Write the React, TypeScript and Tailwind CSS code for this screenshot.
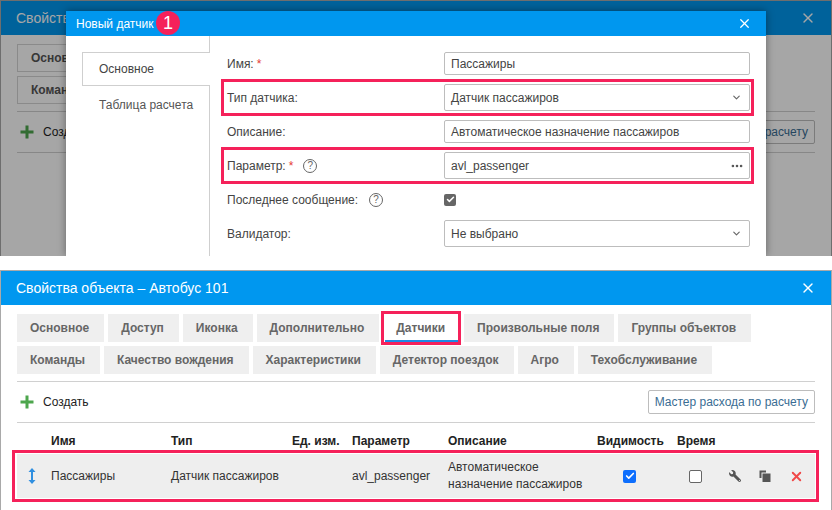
import React from 'react';
import { Check, ChevronDown, Ellipsis, X } from 'lucide-react';
import { FaWrench } from 'react-icons/fa';

const ROW_1 = ['Основное', 'Доступ', 'Иконка', 'Дополнительно', 'Датчики', 'Произвольные поля', 'Группы объектов'];
const ROW_2 = ['Команды', 'Качество вождения', 'Характеристики', 'Детектор поездок', 'Агро', 'Техобслуживание'];

const GRID = 'grid grid-cols-[34px_120px_121px_60px_96px_149px_80px_1fr] items-center';

function Highlight({ className }: { className: string }) {
  return <div className={`absolute border-[3px] border-[#f5215a] pointer-events-none ${className}`} />;
}

function PlusIcon() {
  return (
    <svg width="14" height="14" viewBox="0 0 14 14">
      <rect x="5.5" y="0.5" width="3" height="13" fill="#4da64d" />
      <rect x="0.5" y="5.5" width="13" height="3" fill="#4da64d" />
    </svg>
  );
}

function SortIcon() {
  return (
    <svg width="8" height="16" viewBox="0 0 8 16">
      <path d="M4 0 L7.5 4 H5 V12 H7.5 L4 16 L0.5 12 H3 V4 H0.5 Z" fill="#2f8fe0" />
    </svg>
  );
}

function CopyIcon() {
  return (
    <svg width="12" height="12" viewBox="0 0 12 12">
      <path d="M0.5 0.5 H7 V2.5 H2.5 V8 H0.5 Z" fill="#555" />
      <rect x="3.5" y="3.5" width="8" height="8.5" fill="#555" />
    </svg>
  );
}

function Help() {
  return (
    <span className="w-[14px] h-[14px] rounded-full border border-[#666] text-[#666] text-[10px] leading-[12px] text-center">?</span>
  );
}

function Tab({ label, outlined, active }: { label: string; outlined?: boolean; active?: boolean }) {
  return (
    <div
      className={`relative h-[28px] pl-[13px] pr-[15px] flex items-center text-[12px] font-bold whitespace-nowrap ${
        outlined ? 'bg-white border border-[#d4d4d4] text-[#555]' : 'bg-[#efefef] text-[#666]'
      } ${active && !outlined ? 'text-[#333] bg-white' : ''}`}
    >
      {label}
      {active && !outlined && (
        <>
          <div className="absolute left-[2px] right-[1px] bottom-0 h-[2px] bg-[#1e88e5]" />
          <Highlight className="-left-[2px] -right-[1px] -top-[3px] -bottom-[3px]" />
        </>
      )}
    </div>
  );
}

function ObjectDialog({ background }: { background?: boolean }) {
  return (
    <div className={`bg-white border-l border-r border-t border-[#a9a9a9] ${background ? 'h-[300px]' : 'h-[240px]'}`}>
      <div className="h-[34px] bg-[#0097ef] flex items-center justify-between pl-[15px] pr-[15px] text-white text-[14px]">
        <span>Свойства объекта – Автобус 101</span>
        <X size={16} strokeWidth={2} />
      </div>
      <div className="mx-[16px]">
        <div className="pt-[9px] flex flex-col gap-[4px]">
          <div className="flex gap-[4px]">
            {ROW_1.map((t) => (
              <Tab key={t} label={t} outlined={background} active={t === 'Датчики'} />
            ))}
          </div>
          <div className="flex gap-[4px]">
            {ROW_2.map((t) => (
              <Tab key={t} label={t} outlined={background} />
            ))}
          </div>
        </div>
        <div className="mt-[7px] h-[42px] border-t border-b border-[#d0d0d0] flex items-center justify-between">
          <div className="flex items-center gap-[9px] pl-[3px] text-[12px] text-[#222]">
            <PlusIcon />
            <span>Создать</span>
          </div>
          <div className="h-[24px] px-[6px] flex items-center bg-white border border-[#bdbdbd] rounded-[2px] text-[12px] text-[#3a6d93]">
            Мастер расхода по расчету
          </div>
        </div>
        {!background && (
          <>
            <div className={`${GRID} h-[31px] pt-[5px] text-[12px] font-bold text-[#222]`}>
              <span />
              <span>Имя</span>
              <span>Тип</span>
              <span>Ед. изм.</span>
              <span>Параметр</span>
              <span>Описание</span>
              <span>Видимость</span>
              <span>Время</span>
            </div>
            <div className={`${GRID} relative h-[44px] bg-[#eeeeee] text-[12px] text-[#333]`}>
              <Highlight className="-left-[5px] -right-[4px] -top-[4px] -bottom-[4px]" />
              <div className="pl-[11px] flex items-center">
                <SortIcon />
              </div>
              <span>Пассажиры</span>
              <span>Датчик пассажиров</span>
              <span />
              <span>avl_passenger</span>
              <span className="leading-[17px]">
                Автоматическое
                <br />
                назначение пассажиров
              </span>
              <div className="pl-[26px]">
                <div className="w-[13px] h-[13px] rounded-[2px] bg-[#0d6efd] flex items-center justify-center">
                  <Check size={10} strokeWidth={4} className="text-white" />
                </div>
              </div>
              <div className="flex items-center pl-[12px]">
                <div className="w-[13px] h-[13px] rounded-[2px] bg-white border border-[#666]" />
                <div className="ml-[27px] w-[12px] flex justify-center text-[#555]">
                  <FaWrench size={12} className="-scale-x-100" />
                </div>
                <div className="ml-[18px]">
                  <CopyIcon />
                </div>
                <div className="ml-[18px] text-[#f04848]">
                  <X size={15} strokeWidth={3} />
                </div>
              </div>
            </div>
          </>
        )}
      </div>
    </div>
  );
}

function Field({ children, right }: { children: React.ReactNode; right?: React.ReactNode }) {
  return (
    <div className="h-full flex items-center justify-between bg-white border border-[#bdbdbd] rounded-[2px] pl-[6px] pr-[5px] text-[12px] text-[#444]">
      <span>{children}</span>
      {right}
    </div>
  );
}

function FormRow({
  label,
  height,
  highlight,
  children,
}: {
  label: React.ReactNode;
  height: string;
  highlight?: boolean;
  children: React.ReactNode;
}) {
  return (
    <div className={`relative grid grid-cols-[217px_1fr] items-center ${height}`}>
      <div className="flex items-center text-[12px] text-[#444]">{label}</div>
      {children && <div className="h-full">{children}</div>}
      {highlight && <Highlight className="-left-[6px] -right-[4px] -top-[5px] -bottom-[5px]" />}
    </div>
  );
}

function SensorDialog() {
  const Chevron = <ChevronDown size={11} strokeWidth={2.5} className="text-[#666] mr-[2px]" />;
  return (
    <div className="absolute left-[66px] top-[11px] w-[700px] h-[245px] bg-white shadow-[0_0_8px_rgba(0,0,0,0.4)] flex flex-col">
      <div className="relative h-[25px] shrink-0 bg-[#0097ef] flex items-center justify-between pl-[10px] pr-[14px] text-white text-[12px]">
        <span>Новый датчик</span>
        <X size={15} strokeWidth={2} />
        <div className="absolute left-[90px] top-0 w-[24px] h-[24px] rounded-full bg-[#f5215a] flex items-center justify-center text-[18px]">
          1
        </div>
      </div>
      <div className="flex-1 flex">
        <div className="w-[144px] shrink-0 pl-[16px] flex flex-col">
          <div className="h-[16px] border-r border-[#cfcfcf]" />
          <div className="h-[34px] flex items-center pl-[16px] border-l border-t border-b border-[#cfcfcf] text-[12px] text-[#444]">
            Основное
          </div>
          <div className="flex-1 border-r border-[#cfcfcf] pl-[17px] pt-[10px] text-[12px] text-[#555]">Таблица расчета</div>
        </div>
        <div className="pl-[17px] pr-[16px] flex-1 pt-[16px] flex flex-col gap-[9px]">
          <FormRow
            height="h-[23px]"
            label={
              <>
                Имя: <span className="text-[#e53935] ml-[3px]">*</span>
              </>
            }
          >
            <Field>Пассажиры</Field>
          </FormRow>
          <FormRow height="h-[27px]" highlight label="Тип датчика:">
            <Field right={Chevron}>Датчик пассажиров</Field>
          </FormRow>
          <FormRow height="h-[23px]" label="Описание:">
            <Field>Автоматическое назначение пассажиров</Field>
          </FormRow>
          <FormRow
            height="h-[27px]"
            highlight
            label={
              <>
                Параметр: <span className="text-[#e53935] ml-[3px]">*</span>
                <span className="ml-[10px] flex">
                  <Help />
                </span>
              </>
            }
          >
            <Field right={<Ellipsis size={14} strokeWidth={2.5} className="text-[#555]" />}>avl_passenger</Field>
          </FormRow>
          <FormRow
            height="h-[23px]"
            label={
              <>
                Последнее сообщение:
                <span className="ml-[11px] flex">
                  <Help />
                </span>
              </>
            }
          >
            <div className="h-full flex items-center">
              <div className="w-[12px] h-[12px] rounded-[2px] bg-[#666] flex items-center justify-center">
                <Check size={9} strokeWidth={4} className="text-white" />
              </div>
            </div>
          </FormRow>
          <FormRow height="h-[27px]" label="Валидатор:">
            <Field right={Chevron}>Не выбрано</Field>
          </FormRow>
        </div>
      </div>
    </div>
  );
}

export default function App() {
  return (
    <div className="w-[832px] h-[510px] overflow-hidden bg-white font-['Liberation_Sans',sans-serif]">
      <div className="relative h-[256px] overflow-hidden">
        <ObjectDialog background />
        <div className="absolute inset-0 bg-black/35" />
        <SensorDialog />
      </div>
      <div className="pt-[14px]">
        <ObjectDialog />
      </div>
    </div>
  );
}
